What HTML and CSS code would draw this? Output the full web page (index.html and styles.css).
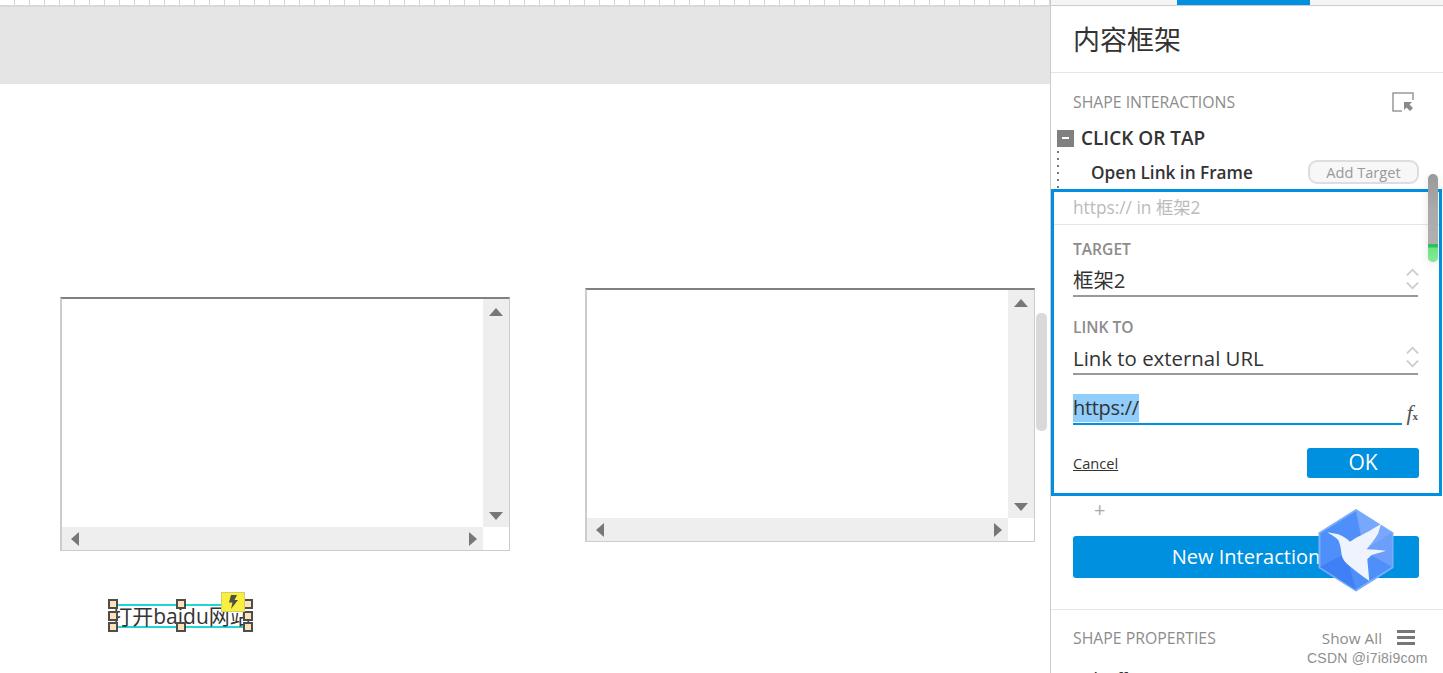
FILE: index.html
```html
<!DOCTYPE html>
<html lang="zh">
  <head>
    <meta charset="utf-8" />
    <title>内容框架</title>
    <link rel="stylesheet" href="styles.css">
  </head>
  <body>
    <div class="App">
      <section class="Canvas">
        <div class="ruler"></div>
        <div class="band"></div>
        <div class="stage">
          <div class="frame frame-one">
            <div class="frame-view"></div>
            <div class="vbar">
              <span class="arrow up"></span>
              <span class="arrow down"></span>
            </div>
            <div class="hbar">
              <span class="arrow left"></span>
              <span class="arrow right"></span>
            </div>
            <div class="corner"></div>
          </div>
          <div class="frame frame-two">
            <div class="frame-view"></div>
            <div class="vbar">
              <span class="arrow up"></span>
              <span class="arrow down"></span>
            </div>
            <div class="hbar">
              <span class="arrow left"></span>
              <span class="arrow right"></span>
            </div>
            <div class="corner"></div>
          </div>

          <div class="widget">
            <span class="widget-text">打开baidu网站</span>
            <i class="handle h1"></i>
            <i class="handle h2"></i>
            <i class="handle h3"></i>
            <i class="handle h4"></i>
            <i class="handle h5"></i>
            <i class="handle h6"></i>
            <i class="handle h7"></i>
            <i class="handle h8"></i>
            <div class="bolt">
              <svg width="14" height="16" viewBox="0 0 14 16"><path d="M5 1h6L8.500 6H12l-7 9 1.500-6.500H3z" fill="#4f4f45"/></svg>
            </div>
          </div>
        </div>
        <div class="canvas-scroll"></div>
      </section>

      <aside class="Panel">
        <div class="tabs"><span class="tab-active"></span></div>
        <h1>内容框架</h1>

        <section class="Interactions">
          <div class="section-head">
            <span>SHAPE INTERACTIONS</span>
            <svg class="pick-icon" width="22" height="20" viewBox="0 0 22 20">
              <path d="M21 8V1H1v18h9" fill="none" stroke="#999" stroke-width="1.500"/>
              <path d="M12 10h8l-2.500 2.500L21 16l-3 3-3.500-3.500L12 18z" fill="#8a8a8a"/>
            </svg>
          </div>
          <div class="event">
            <span class="minus"></span>
            CLICK OR TAP
          </div>
          <div class="action">
            <strong>Open Link in Frame</strong>
            <button class="btn-target">Add Target</button>
          </div>

          <div class="Editor">
            <div class="summary">https:// in 框架2</div>
            <div class="fields">
              <label>TARGET</label>
              <div class="select">
                框架2
                <svg class="updown" width="13" height="24" viewBox="0 0 14 24"><path d="M1 8l6-6 6 6M1 16l6 6 6-6" fill="none" stroke="#ccc" stroke-width="2"/></svg>
              </div>
              <label class="second">LINK TO</label>
              <div class="select">
                Link to external URL
                <svg class="updown" width="13" height="24" viewBox="0 0 14 24"><path d="M1 8l6-6 6 6M1 16l6 6 6-6" fill="none" stroke="#ccc" stroke-width="2"/></svg>
              </div>
              <div class="url-row">
                <div class="url"><span class="selected">https://</span></div>
                <span class="fx"><em>f</em><small>x</small></span>
              </div>
              <div class="buttons">
                <a href="#cancel">Cancel</a>
                <button class="btn-ok">OK</button>
              </div>
            </div>
          </div>

          <div class="plus">+</div>
          <button class="btn-new">New Interaction</button>
        </section>

        <section class="Properties">
          <div class="section-head">
            <span>SHAPE PROPERTIES</span>
            <span class="show-all">
              Show All
              <span class="burger"><i></i><i></i><i></i></span>
            </span>
          </div>
          <div class="prop">Style Effects</div>
        </section>

        <div class="panel-scroll"><span class="tip"></span></div>
        <svg class="bird" width="76" height="83" viewBox="0 0 76 83">
          <path d="M38 1 74.500 24v34.500L38 81.500 1.500 58.500V24z" fill="#4f8ff9" stroke="#7aaefc" stroke-width="2" stroke-linejoin="round"/>
          <path d="M38 2 74 24 46 42z" fill="#78a8fb"/>
          <path d="M74 24v34L46 42z" fill="#6b9ffa"/>
          <path d="M2 58 28 44 38 81z" fill="#3f80f5"/>
          <path d="M9.300 23.300C13 24 17 24.500 20.300 25.300 25 27 29 30 32 32.700 37 29 42 27 47 24.300 53 21 58 18 63 15 62 19 61 21 60.300 24.300 57 30 53 35 48.700 40.300 55 40.500 62 41 68 41.700 63 43.500 58 44.500 53.700 46 52 47.500 50.500 49 49.300 50.300L51.300 72C47 69 43 66 38.700 62.700 34 59 30 56 27 52.700 25 50 24 48 23.700 46 23 41 22.500 36 20.300 31 17 28 13 25.500 9.300 23.300z" fill="#eef3fe"/>
        </svg>
        <div class="watermark">CSDN @i7i8i9com</div>
      </aside>
    </div>
  </body>
</html>
```
FILE: styles.css
```css
html, body {
  margin: 0;
  height: 100%;
  overflow: hidden;
}
body {
  font-family: "Open Sans", "Noto Sans CJK SC", sans-serif;
  color: #333;
  background: #fff;
}

.App {
  display: flex;
  height: 673px;
}

/* left side: the axure canvas */
.Canvas {
  width: 1050px;
  position: relative;
  overflow: hidden;
  display: flex;
  flex-direction: column;
}
.ruler {
  height: 7px;
  flex: none;
  box-sizing: border-box;
  border-bottom: 2px solid #d9d9d9;
  background: repeating-linear-gradient(90deg, #fff 0, #fff 14px, #d4d4d4 14px, #d4d4d4 15px);
}
.band {
  height: 77px;
  flex: none;
  background: #e5e5e5;
}
.stage {
  flex: 1;
  position: relative;
  background: #fff;
}
.canvas-scroll {
  position: absolute;
  left: 1036px;
  top: 313px;
  width: 11px;
  height: 118px;
  border-radius: 5px;
  background: #d9d9d9;
}

.frame {
  position: absolute;
  box-sizing: border-box;
  display: grid;
  grid-template-columns: 1fr 26px;
  grid-template-rows: 1fr 23px;
  width: 450px;
  height: 254px;
  border: 2px solid #ccc;
  border-top: 2px solid #808080;
  border-bottom-width: 1px;
  border-right-width: 1px;
  background: #fff;
}
.frame-one {
  left: 60px;
  top: 213px;
}
.frame-two {
  left: 585px;
  top: 204px;
}
.vbar, .hbar {
  background: #eee;
  position: relative;
  display: flex;
  justify-content: space-between;
}
.vbar {
  flex-direction: column;
  align-items: center;
  padding: 9px 0 7px;
}
.hbar {
  align-items: center;
  padding: 0 6px 0 9px;
}
.arrow {
  width: 0;
  height: 0;
  border: 0 solid transparent;
}
.arrow.up {
  border-width: 0 7px 8px;
  border-bottom-color: #777;
}
.arrow.down {
  border-width: 8px 7px 0;
  border-top-color: #777;
}
.arrow.left {
  border-width: 7px 8px 7px 0;
  border-right-color: #777;
}
.arrow.right {
  border-width: 7px 0 7px 8px;
  border-left-color: #777;
}

.widget {
  position: absolute;
  left: 118px;
  top: 520px;
  width: 126px;
  height: 24px;
  box-sizing: border-box;
  padding-bottom: 3px;
  border-top: 2px solid #1fd6d6;
  border-bottom: 2px solid #1fd6d6;
  display: flex;
  align-items: center;
  justify-content: center;
}
.widget-text {
  font-size: 21px;
  white-space: nowrap;
}
.handle {
  position: absolute;
  width: 6px;
  height: 6px;
  border: 2px solid #4d4d4d;
  background: #fde3b8;
}
.h1 { left: -10px; top: -7px; }
.h2 { left: 58px; top: -7px; }
.h3 { left: 125px; top: -7px; }
.h4 { left: -10px; top: 5px; }
.h5 { left: 125px; top: 5px; }
.h6 { left: -10px; top: 16px; }
.h7 { left: 58px; top: 16px; }
.h8 { left: 125px; top: 16px; }
.bolt {
  position: absolute;
  left: 103px;
  top: -14px;
  width: 24px;
  height: 20px;
  box-sizing: border-box;
  border: 1px solid #cfcf70;
  background: #f8f03c;
  display: flex;
  align-items: center;
  justify-content: center;
}

/* right side: the properties panel */
.Panel {
  width: 393px;
  position: relative;
  box-sizing: border-box;
  border-left: 1px solid #ccc;
  overflow: hidden;
}
.tabs {
  height: 6px;
  box-sizing: border-box;
  border-bottom: 1px solid #ccc;
  background: #f5f5f5;
  padding-left: 126px;
}
.tab-active {
  display: block;
  width: 133px;
  height: 5px;
  background: #0090e0;
}
.Panel h1 {
  margin: 0;
  height: 67px;
  box-sizing: border-box;
  padding-left: 22px;
  border-bottom: 1px solid #e5e5e5;
  font-size: 27px;
  font-weight: 400;
  line-height: 67px;
}

.Interactions {
  height: 537px;
  box-sizing: border-box;
  border-bottom: 1px solid #e5e5e5;
}
.section-head {
  height: 58px;
  box-sizing: border-box;
  padding: 0 28px 0 22px;
  display: flex;
  align-items: center;
  justify-content: space-between;
  font-size: 15.8px;
  color: #8c8c8c;
}
.pick-icon {
  margin-right: 1px;
}
.event {
  height: 22px;
  margin-top: -4px;
  padding-left: 6px;
  display: flex;
  align-items: center;
  gap: 7px;
  font-size: 19px;
  font-weight: 600;
}
.minus {
  width: 17px;
  height: 17px;
  background: #808080;
  position: relative;
}
.minus::after {
  content: "";
  position: absolute;
  left: 5px;
  top: 7px;
  width: 7px;
  height: 2px;
  background: #fff;
}
.action {
  height: 38px;
  box-sizing: border-box;
  margin-top: 2px;
  margin-left: 6px;
  padding: 4px 24px 0 34px;
  display: flex;
  align-items: center;
  justify-content: space-between;
  background: repeating-linear-gradient(#777 0, #777 2px, transparent 2px, transparent 7px) 0 0 / 2px 100% no-repeat;
  font-size: 17.2px;
}
.action strong {
  font-weight: 600;
}
.btn-target {
  width: 111px;
  height: 24px;
  padding: 0;
  border: 2px solid #ddd;
  border-radius: 9px;
  background: #f7f7f7;
  color: #999;
  font: 14.6px "Open Sans", sans-serif;
}

.Editor {
  height: 307px;
  box-sizing: border-box;
  border: 3px solid #0090e0;
  margin-right: 1px;
}
.summary {
  height: 33px;
  box-sizing: border-box;
  padding-left: 19px;
  border-bottom: 1px solid #e5e5e5;
  font-size: 17.3px;
  line-height: 31px;
  color: #bbb;
}
.fields {
  padding: 15px 21px 0 19px;
}
.fields label {
  display: block;
  height: 20px;
  font-size: 15.6px;
  font-weight: 600;
  line-height: 18px;
  color: #8c8c8c;
}
.fields label.second {
  margin-top: 21px;
}
.select {
  height: 37px;
  box-sizing: border-box;
  border-bottom: 2px solid #999;
  position: relative;
  font-size: 20.4px;
  line-height: 41px;
}
.updown {
  position: absolute;
  right: -1px;
  top: 7px;
}
.url-row {
  margin-top: 19px;
  display: flex;
  align-items: flex-end;
  height: 31px;
}
.url {
  flex: 1;
  border-bottom: 2px solid #0090e0;
  height: 31px;
  box-sizing: border-box;
  font-size: 20px;
  line-height: 28px;
}
.selected {
  display: inline-block;
  height: 28px;
  letter-spacing: -0.3px;
  background: #90cdfb;
}
.fx {
  width: 16px;
  text-align: right;
  font-family: "Liberation Serif", serif;
  color: #555;
  line-height: 18px;
}
.fx em {
  font-size: 22px;
}
.fx small {
  font-size: 11px;
  font-weight: 700;
}
.buttons {
  margin-top: 23px;
  display: flex;
  align-items: center;
  justify-content: space-between;
}
.buttons a {
  color: #333;
  font-size: 14.6px;
}
.btn-ok {
  width: 112px;
  height: 30px;
  padding: 0 0 2px;
  margin-right: -1px;
  border: 0;
  border-radius: 3px;
  background: #0090e0;
  color: #fff;
  font: 21px "Open Sans", sans-serif;
}
.plus {
  height: 30px;
  padding-left: 43px;
  font-size: 20px;
  line-height: 28px;
  color: #aaa;
}
.btn-new {
  display: block;
  margin: 10px 0 0 22px;
  width: 346px;
  height: 42px;
  padding: 0 0 2px;
  border: 0;
  border-radius: 3px;
  background: #0090e0;
  color: #fff;
  font: 20px "Open Sans", sans-serif;
}

.Properties .section-head {
  height: 55px;
}
.show-all {
  display: flex;
  align-items: center;
  gap: 15px;
  font-size: 15.3px;
}
.burger {
  display: flex;
  flex-direction: column;
  gap: 3px;
  width: 18px;
}
.burger i {
  height: 3px;
  background: #777;
}
.prop {
  margin-top: 3px;
  padding-left: 22px;
  font-size: 14px;
  font-weight: 600;
}

.panel-scroll {
  position: absolute;
  left: 377px;
  top: 174px;
  width: 10px;
  height: 88px;
  border-radius: 5px;
  background: linear-gradient(#999, #aaa 40%, #b3b3b3);
  box-shadow: 0 2px 8px rgba(0, 0, 0, 0.1);
  overflow: hidden;
}
.tip {
  position: absolute;
  left: 0;
  right: 0;
  bottom: 0;
  height: 18px;
  background: linear-gradient(#2fbf60 0, #2fbf60 3px, #6fe583 4px, #86ea97);
}
.bird {
  position: absolute;
  left: 267px;
  top: 509px;
}
.watermark {
  position: absolute;
  left: 256px;
  top: 650px;
  font-family: "Liberation Sans", sans-serif;
  font-size: 14px;
  letter-spacing: 0.25px;
  color: #8f8f8f;
  white-space: nowrap;
}
```
